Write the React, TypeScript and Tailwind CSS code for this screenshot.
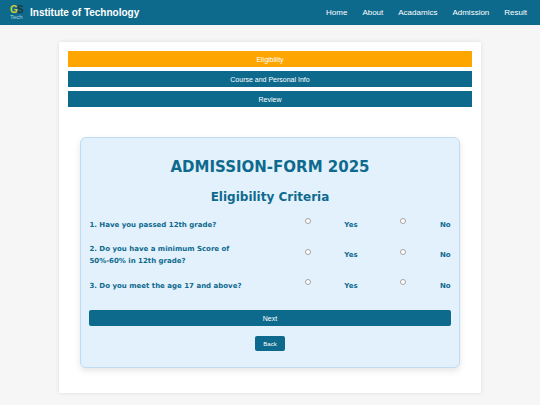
import { useState } from 'react';

const navLinks = ['Home', 'About', 'Acadamics', 'Admission', 'Result'];
const steps = ['Eligibility', 'Course and Personal Info', 'Review'];

const questions = [
  { id: 'passed', text: '1. Have you passed 12th grade?' },
  { id: 'score', text: '2. Do you have a minimum Score of 50%-60% in 12th grade?' },
  { id: 'age', text: '3. Do you meet the age 17 and above?' },
];

function Logo() {
  return (
    <svg viewBox="0 0 16 20" className="h-5 w-4" fontFamily="Liberation Sans, sans-serif">
      <text x="2" y="10" fontSize="10" fontWeight="bold" fill="#d4cf35">G</text>
      <text x="9" y="10" fontSize="10" fontWeight="bold" fill="#1c3b35">S</text>
      <text x="2" y="16" fontSize="6" fill="#a9cfdb">Tech</text>
    </svg>
  );
}

function Header() {
  return (
    <header className="flex h-[25px] items-center justify-between bg-[#0e6a8d] pr-[13px] pl-2 text-white">
      <div className="flex items-center gap-[6px]">
        <Logo />
        <span className="text-[10px] font-bold">Institute of Technology</span>
      </div>
      <nav className="flex gap-[15px] text-[8px]">
        {navLinks.map((link) => (
          <a key={link} href="#">{link}</a>
        ))}
      </nav>
    </header>
  );
}

function Option({ name, value, label }: { name: string; value: string; label: string }) {
  const id = `${name}-${value}`;
  return (
    <div className="flex items-center justify-between">
      <input
        type="radio"
        id={id}
        name={name}
        value={value}
        className="mb-[7px] size-[6px] appearance-none rounded-full border border-[#a3a3a3] bg-white checked:bg-[#0e6a8d]"
      />
      <label htmlFor={id}>{label}</label>
    </div>
  );
}

export default function App() {
  const [step, setStep] = useState(0);

  return (
    <div className="min-h-screen bg-[#f6f6f6] pb-[11px] font-['Liberation_Sans',Arial,sans-serif]">
      <Header />

      <main className="mx-auto mt-[17px] w-[78%] bg-white px-[9px] pt-[9px] pb-[25px] shadow-[0_0_4px_rgba(0,0,0,0.1)]">
        <div className="flex flex-col gap-1">
          {steps.map((label, i) => (
            <button
              key={label}
              type="button"
              onClick={() => setStep(i)}
              className={`h-4 w-full text-[7px] leading-none text-white ${i === step ? 'bg-[#ffa500]' : 'bg-[#0e6a8d]'}`}
            >
              {label}
            </button>
          ))}
        </div>

        <form
          onSubmit={(e) => e.preventDefault()}
          className="mx-3 mt-[30px] rounded-[6px] border border-[#c0dcf2] bg-[#e3f1fd] px-2 pt-5 pb-4 font-['DejaVu_Sans',Verdana,sans-serif] font-bold text-[#0e6a8d] shadow-[0_3px_6px_rgba(0,0,0,0.1)]"
        >
          <h1 className="text-center text-[15px] leading-[18px]">ADMISSION-FORM 2025</h1>
          <h2 className="mt-3 text-center text-[12px] leading-[18px]">Eligibility Criteria</h2>

          <div className="mt-3 flex flex-col gap-3 text-[7px] leading-[12px]">
            {questions.map((q) => (
              <div key={q.id} className="grid grid-cols-[1fr_53px_51px] items-center gap-x-[42px]">
                <p className="max-w-[164px]">{q.text}</p>
                <Option name={q.id} value="yes" label="Yes" />
                <Option name={q.id} value="no" label="No" />
              </div>
            ))}
          </div>

          <div className="mt-[18px] flex flex-col items-center gap-[10px] font-['Liberation_Sans',Arial,sans-serif] font-normal text-white">
            <button type="submit" className="h-4 w-full rounded-[2px] bg-[#0e6a8d] text-[7px] leading-none">
              Next
            </button>
            <button type="button" className="h-[15px] rounded-[2px] bg-[#0e6a8d] px-2 text-[6px] leading-none">
              Back
            </button>
          </div>
        </form>
      </main>
    </div>
  );
}
